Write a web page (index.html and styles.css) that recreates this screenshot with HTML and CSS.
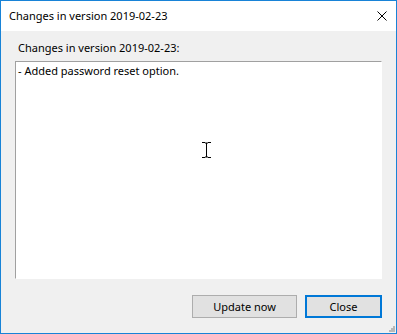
FILE: index.html
```html
<!DOCTYPE html>
<html>
<head>
<meta charset="utf-8">
<link rel="stylesheet" href="styles.css">
</head>
<body>
<div class="window">
  <div class="titlebar">
    <span class="title">Changes in version 2019-02-23</span>
    <svg class="close-x" width="10" height="10" viewBox="0 0 10 10"><path d="M0.5 0.5 L9.5 9.5 M9.5 0.5 L0.5 9.5" stroke="#000" stroke-width="1" fill="none"/></svg>
  </div>
  <div class="content">
    <div class="label">Changes in version 2019-02-23:</div>
    <div class="textbox">- Added password reset option.</div>
    <div class="buttons">
      <button class="btn">Update now</button>
      <button class="btn default">Close</button>
    </div>
    <svg class="grip" width="6" height="6" viewBox="0 0 6 6">
      <rect x="4" y="0" width="2" height="2" fill="#b8b8b8"/>
      <rect x="2" y="2" width="2" height="2" fill="#b8b8b8"/>
      <rect x="4" y="2" width="2" height="2" fill="#b8b8b8"/>
      <rect x="0" y="4" width="2" height="2" fill="#b8b8b8"/>
      <rect x="2" y="4" width="2" height="2" fill="#b8b8b8"/>
      <rect x="4" y="4" width="2" height="2" fill="#b8b8b8"/>
    </svg>
    <svg class="cursor" width="9" height="16" viewBox="0 0 9 16"><path d="M0 0.5 H3 M6 0.5 H9 M3 1 H6 M4.5 1 V15 M3 15 H6 M0 15.5 H3 M6 15.5 H9" stroke="#000" stroke-width="1" fill="none"/></svg>
  </div>
</div>
</body>
</html>
```
FILE: styles.css
```css
html, body {
  margin: 0;
  padding: 0;
  background: #ffffff;
}
.window {
  width: 397px;
  height: 334px;
  box-sizing: border-box;
  border: 1px solid #1883d7;
  display: flex;
  flex-direction: column;
  font-family: "Segoe UI", "Noto Sans", "Open Sans", sans-serif;
  font-size: 11px;
  color: #000;
}
.titlebar {
  height: 30px;
  flex: none;
  background: #ffffff;
  display: flex;
  align-items: center;
  justify-content: space-between;
  padding: 0 9px 0 8px;
}
.title {
  line-height: 15px;
  margin-top: -1px;
}
.close-x {
  display: block;
  margin-top: -1px;
}
.content {
  flex: 1;
  background: #f0f0f0;
  position: relative;
  padding: 9px 14px 0 14px;
  display: flex;
  flex-direction: column;
}
.label {
  line-height: 15px;
  padding-left: 3px;
  margin-bottom: 6px;
}
.textbox {
  height: 218px;
  box-sizing: border-box;
  background: #ffffff;
  border-top: 1px solid #a0a0a0;
  border-left: 1px solid #a0a0a0;
  border-right: 1px solid #ffffff;
  border-bottom: 1px solid #ffffff;
  padding: 1px 2px;
  line-height: 15px;
}
.buttons {
  margin-top: 16px;
  display: flex;
  justify-content: flex-end;
  gap: 8px;
}
.btn {
  height: 23px;
  box-sizing: border-box;
  background: #e1e1e1;
  border: 1px solid #adadad;
  font-family: inherit;
  font-size: 11px;
  color: #000;
  padding: 0;
  margin: 0;
}
.btn:first-child {
  width: 105px;
}
.btn.default {
  width: 77px;
  border: 2px solid #0078d7;
}
.grip {
  position: absolute;
  right: 1px;
  bottom: 1px;
}
.cursor {
  position: absolute;
  left: 201px;
  top: 111px;
}
```
